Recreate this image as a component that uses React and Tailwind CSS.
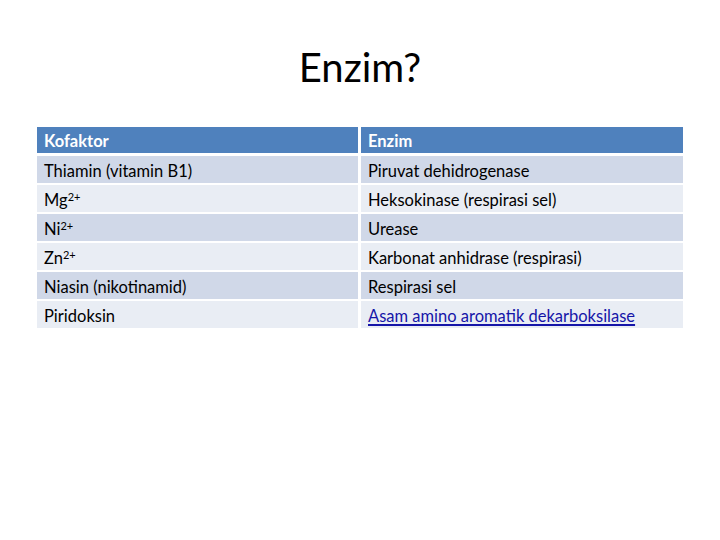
const rows = [
  ["Thiamin (vitamin B1)", "Piruvat dehidrogenase"],
  [<>Mg<sup className="text-[11px]">2+</sup></>, "Heksokinase (respirasi sel)"],
  [<>Ni<sup className="text-[11px]">2+</sup></>, "Urease"],
  [<>Zn<sup className="text-[11px]">2+</sup></>, "Karbonat anhidrase (respirasi)"],
  ["Niasin (nikotinamid)", "Respirasi sel"],
  ["Piridoksin", "link:Asam amino aromatik dekarboksilase"],
];

function Cell({ children, shade }) {
  const isLink = typeof children === "string" && children.startsWith("link:");
  return (
    <div
      className={`h-[27px] pl-[7px] pt-[6px] text-[16.5px] leading-[18px] text-black ${
        shade ? "bg-[#d0d8e8]" : "bg-[#e9edf4]"
      }`}
    >
      {isLink ? (
        <span className="text-[#1515a8] underline decoration-[1.5px] underline-offset-2">
          {children.slice(5)}
        </span>
      ) : (
        children
      )}
    </div>
  );
}

export default function App() {
  return (
    <div
      className="w-[720px] h-[540px] bg-white"
      style={{ fontFamily: "Lato, 'Open Sans', sans-serif" }}
    >
      <h1 className="pt-[44px] h-[127px] text-center text-[40px] leading-[46px] text-black">
        Enzim?
      </h1>
      <div className="ml-[37px] w-[646px] flex flex-col gap-[3px]">
        <div className="grid grid-cols-[321px_322px] gap-x-[3px]">
          <div className="h-[26px] bg-[#4f81bd] pl-[7px] pt-[5px] text-[16.5px] leading-[18px] font-bold text-white">
            Kofaktor
          </div>
          <div className="h-[26px] bg-[#4f81bd] pl-[7px] pt-[5px] text-[16.5px] leading-[18px] font-bold text-white">
            Enzim
          </div>
        </div>
        <div className="grid grid-cols-[321px_322px] gap-x-[3px] gap-y-[2px]">
          {rows.map(([a, b], i) => (
            <div key={i} className="contents">
              <Cell shade={i % 2 === 0}>{a}</Cell>
              <Cell shade={i % 2 === 0}>{b}</Cell>
            </div>
          ))}
        </div>
      </div>
    </div>
  );
}
